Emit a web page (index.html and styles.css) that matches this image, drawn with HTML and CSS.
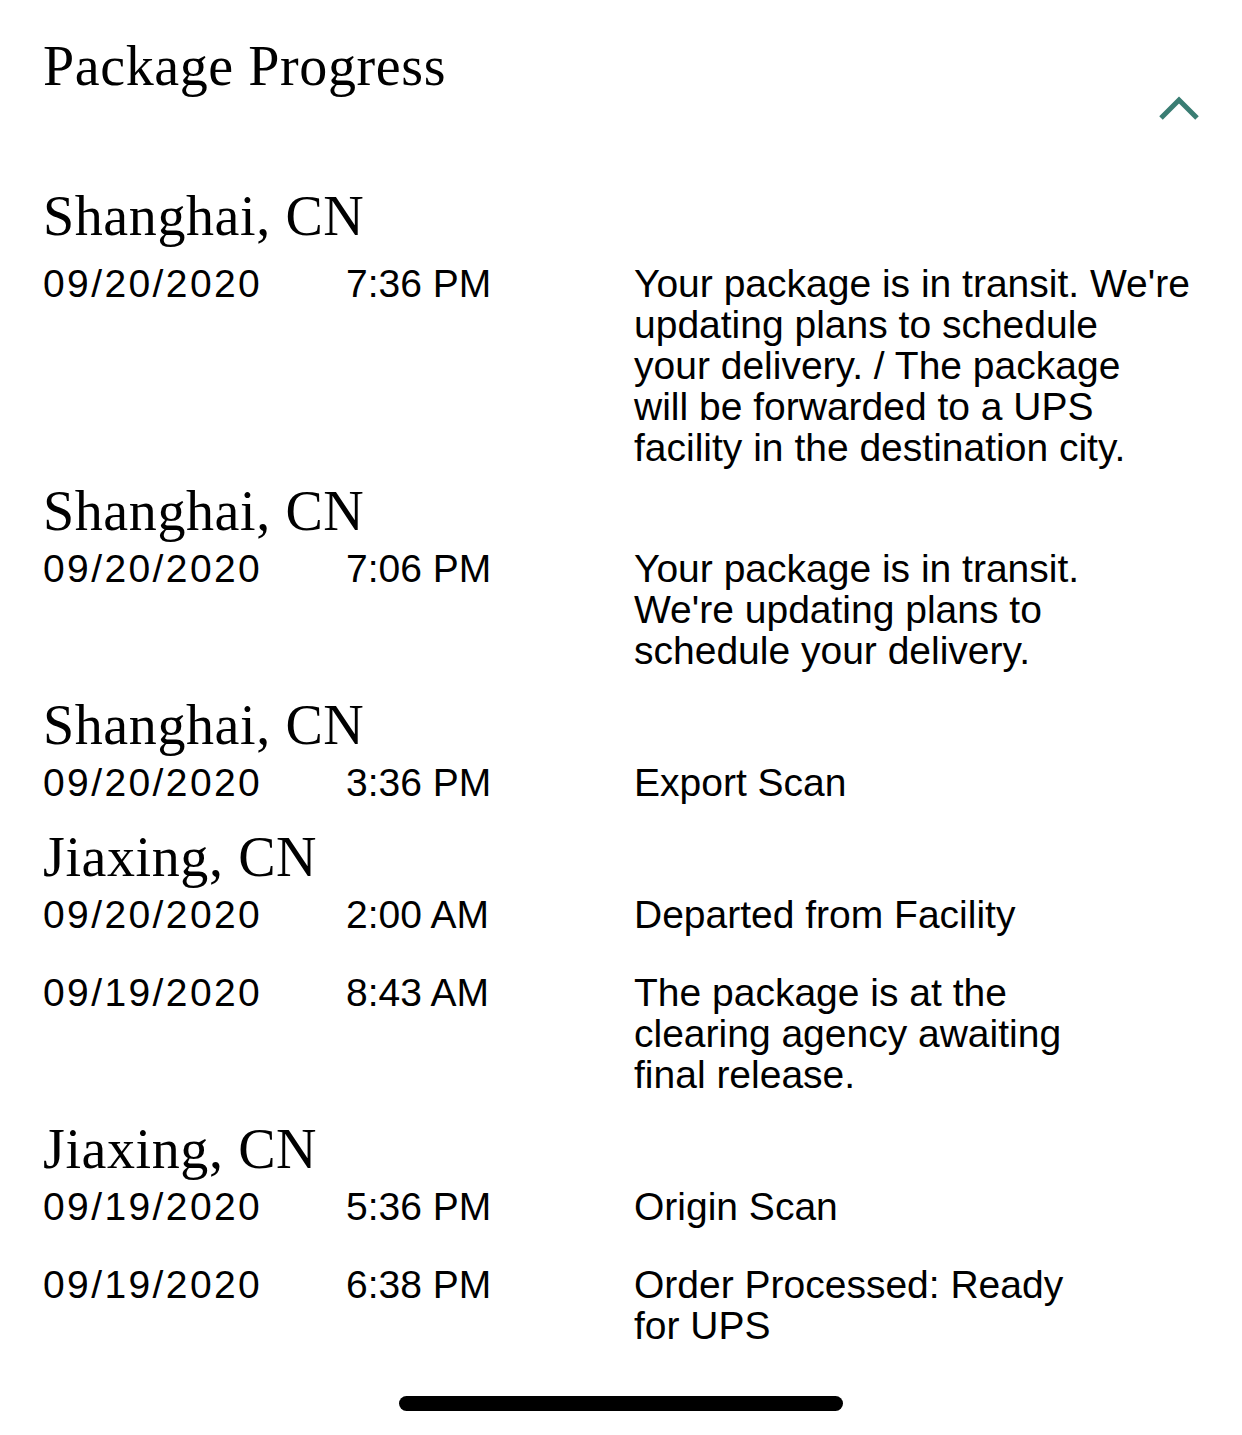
FILE: index.html
```html
<!DOCTYPE html>
<html lang="en">

<head>
    <meta charset="UTF-8">
    <meta name="viewport" content="width=device-width, initial-scale=1.0">
    <title>Package Progress</title>
    <link rel="stylesheet" href="styles.css">
</head>

<body>
    <div class="page">
        <header class="progress-header">
            <h1 class="progress-title">Package Progress</h1>
            <button class="collapse-button" aria-label="Collapse">
                <svg width="44" height="24" viewBox="0 0 44 24">
                    <polyline points="3,22 21,4 39,22" fill="none" stroke="#3a7d73" stroke-width="5" />
                </svg>
            </button>
        </header>

        <div class="progress-list">
            <div class="location-group">
                <div class="location">Shanghai, CN</div>
                <div class="event-row">
                    <div class="event-date">09/20/2020</div>
                    <div class="event-time">7:36 PM</div>
                    <div class="event-desc">Your package is in transit. We're<br>updating plans to schedule<br>your delivery. / The package<br>will be forwarded to a UPS<br>facility in the destination city.</div>
                </div>
            </div>

            <div class="location-group">
                <div class="location">Shanghai, CN</div>
                <div class="event-row">
                    <div class="event-date">09/20/2020</div>
                    <div class="event-time">7:06 PM</div>
                    <div class="event-desc">Your package is in transit.<br>We're updating plans to<br>schedule your delivery.</div>
                </div>
            </div>

            <div class="location-group">
                <div class="location">Shanghai, CN</div>
                <div class="event-row">
                    <div class="event-date">09/20/2020</div>
                    <div class="event-time">3:36 PM</div>
                    <div class="event-desc">Export Scan</div>
                </div>
            </div>

            <div class="location-group">
                <div class="location">Jiaxing, CN</div>
                <div class="event-row">
                    <div class="event-date">09/20/2020</div>
                    <div class="event-time">2:00 AM</div>
                    <div class="event-desc">Departed from Facility</div>
                </div>
                <div class="event-row">
                    <div class="event-date">09/19/2020</div>
                    <div class="event-time">8:43 AM</div>
                    <div class="event-desc">The package is at the<br>clearing agency awaiting<br>final release.</div>
                </div>
            </div>

            <div class="location-group">
                <div class="location">Jiaxing, CN</div>
                <div class="event-row">
                    <div class="event-date">09/19/2020</div>
                    <div class="event-time">5:36 PM</div>
                    <div class="event-desc">Origin Scan</div>
                </div>
                <div class="event-row">
                    <div class="event-date">09/19/2020</div>
                    <div class="event-time">6:38 PM</div>
                    <div class="event-desc">Order Processed: Ready<br>for UPS</div>
                </div>
            </div>
        </div>
    </div>

    <div class="home-indicator"></div>
</body>

</html>
```

FILE: styles.css
```css
body {
    margin: 0;
    padding: 0;
    background: #ffffff;
    color: #000000;
    font-family: 'Liberation Sans', Arial, sans-serif;
}

.page {
    padding: 38px 42px 0 43px;
}

.progress-header {
    display: flex;
    justify-content: space-between;
    align-items: flex-start;
}

.progress-title {
    margin: 0;
    font-family: 'Liberation Serif', 'Times New Roman', serif;
    font-size: 56px;
    font-weight: normal;
    line-height: 56px;
    letter-spacing: 0.6px;
}

.collapse-button {
    margin-top: 58px;
    margin-right: -2px;
    padding: 0;
    border: none;
    background: none;
    cursor: pointer;
    display: block;
}

.collapse-button svg {
    display: block;
}

.progress-list {
    margin-top: 68px;
}

.location-group {
    display: flex;
    flex-direction: column;
    gap: 37px;
    padding-bottom: 26px;
}

.location-group:first-child {
    padding-bottom: 15px;
}

.location {
    font-family: 'Liberation Serif', 'Times New Roman', serif;
    font-size: 56px;
    line-height: 56px;
    letter-spacing: 0.6px;
    margin-bottom: -28px;
}

.location-group:first-child .location {
    margin-bottom: -18px;
}

.event-row {
    display: grid;
    grid-template-columns: 303px 288px 1fr;
    font-size: 39px;
    line-height: 41px;
}

.event-date {
    letter-spacing: 2.4px;
}

.event-desc {
    white-space: nowrap;
}

.home-indicator {
    position: fixed;
    left: 50%;
    bottom: 24px;
    width: 444px;
    height: 15px;
    margin-left: -222px;
    border-radius: 8px;
    background: #000000;
}
```
